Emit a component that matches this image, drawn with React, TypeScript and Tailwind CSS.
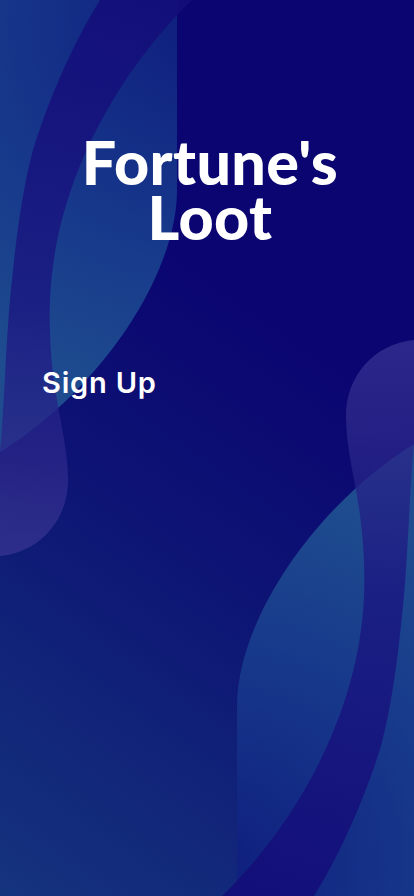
import React from 'react'

// left-top wave group; the same group turned 180deg makes the bottom-right one
function WaveGroup({ turn }: { turn?: boolean }) {
  return (
    <g transform={turn ? 'rotate(180 207 448)' : undefined}>
      <path d="M-20,-20 L177,-20 L177,190 C177,275 100,390 0,452 L-20,462 Z" fill="url(#wave-teal)" />
      <path
        d="M100,0 L192,0 C120,70 55,180 50,300 C47,390 68,430 68,480 C68,520 40,552 0,556 L-20,558 L-20,460 L0,452 C4,420 6,330 12,280 C18,220 25,180 33,150 C50,95 75,40 100,0 Z"
        fill="url(#wave-violet)"
      />
    </g>
  )
}

function Waves() {
  return (
    <svg className="absolute inset-0 h-full w-full" viewBox="0 0 414 896" preserveAspectRatio="none">
      <defs>
        <radialGradient id="wave-teal" gradientUnits="userSpaceOnUse" cx="190" cy="30" r="380">
          <stop offset="0" stopColor="#0f1f7e" />
          <stop offset="0.5" stopColor="#16368a" />
          <stop offset="1" stopColor="#1e4c8f" />
        </radialGradient>
        <linearGradient id="wave-violet" gradientUnits="userSpaceOnUse" x1="0" y1="0" x2="0" y2="556">
          <stop offset="0" stopColor="#130d79" stopOpacity="0.9" />
          <stop offset="0.55" stopColor="#1a1781" stopOpacity="0.8" />
          <stop offset="0.8" stopColor="#2a2689" stopOpacity="0.75" />
          <stop offset="1" stopColor="#3a3694" stopOpacity="0.7" />
        </linearGradient>
      </defs>
      <WaveGroup />
      <WaveGroup turn />
    </svg>
  )
}

export default function App() {
  return (
    <div className="relative h-[896px] w-full overflow-hidden bg-[linear-gradient(35deg,#15347e_0%,#0d1474_40%,#0b0571_65%)]">
      <Waves />
      <div className="relative flex flex-col">
        <h1
          className="mt-[134px] pl-[6px] text-center text-[61px] leading-[55px] font-black tracking-[0.4px] text-white"
          style={{ fontFamily: 'Lato, "Noto Sans", sans-serif' }}
        >
          Fortune's
          <br />
          Loot
        </h1>
        <p
          className="mt-[122px] pl-[42px] text-[29px] leading-[34px] font-semibold tracking-[0.8px] text-white"
          style={{ fontFamily: 'Inter, "Noto Sans", sans-serif' }}
        >
          Sign Up
        </p>
      </div>
    </div>
  )
}
